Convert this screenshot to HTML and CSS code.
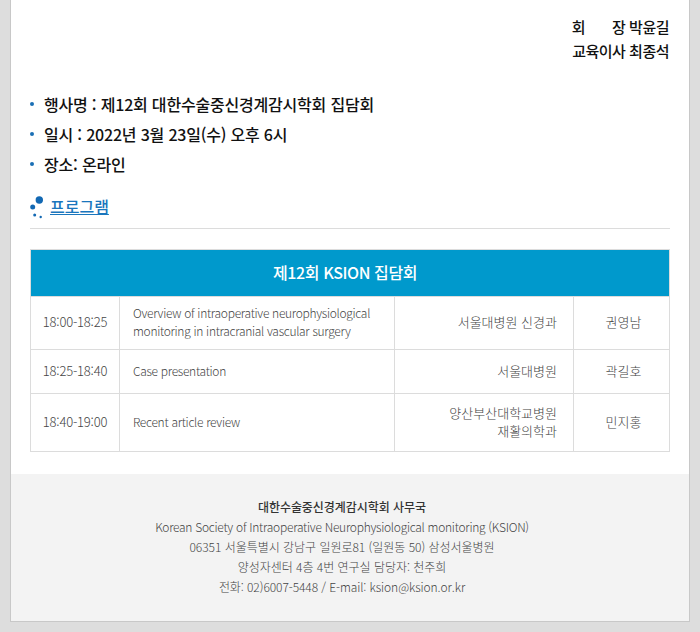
FILE: index.html
```html
<!DOCTYPE html>
<html lang="ko">
<head>
<meta charset="utf-8">
<title>제12회 KSION 집담회</title>
<link rel="stylesheet" href="styles.css">
</head>
<body>
<div class="card">
  <main class="content">
    <div class="sign">
      <p><span class="sign-role">회<i></i>장</span> 박윤길</p>
      <p>교육이사 최종석</p>
    </div>
    <ul class="info">
      <li>행사명 : 제12회 대한수술중신경계감시학회 집담회</li>
      <li>일시 : 2022년 3월 23일(수) 오후 6시</li>
      <li>장소: 온라인</li>
    </ul>
    <h2 class="section">
      <svg class="dots" width="16" height="24" viewBox="0 0 16 24"><circle cx="9.3" cy="5" r="3.7" fill="#1268b3"/><circle cx="2.7" cy="12" r="2.5" fill="#1268b3"/><circle cx="4.7" cy="20" r="1.5" fill="#1268b3"/><circle cx="10.7" cy="22" r="1.2" fill="#1268b3"/></svg>
      <a href="#">프로그램</a>
    </h2>
    <table class="program">
      <colgroup><col class="c1"><col class="c2"><col class="c3"><col class="c4"></colgroup>
      <thead><tr><th colspan="4">제12회 KSION 집담회</th></tr></thead>
      <tbody>
        <tr class="r1"><td class="time">18:00-18:25</td><td class="topic">Overview of intraoperative neurophysiological monitoring in intracranial vascular surgery</td><td class="org">서울대병원 신경과</td><td class="name">권영남</td></tr>
        <tr class="r2"><td class="time">18:25-18:40</td><td class="topic">Case presentation</td><td class="org">서울대병원</td><td class="name">곽길호</td></tr>
        <tr class="r3"><td class="time">18:40-19:00</td><td class="topic">Recent article review</td><td class="org">양산부산대학교병원<br>재활의학과</td><td class="name">민지홍</td></tr>
      </tbody>
    </table>
  </main>
  <footer class="foot">
    <p class="foot-title">대한수술중신경계감시학회 사무국</p>
    <p class="foot-en">Korean Society of Intraoperative Neurophysiological monitoring (KSION)</p>
    <p class="foot-ko">06351 서울특별시 강남구 일원로81 (일원동 50) 삼성서울병원</p>
    <p class="foot-ko">양성자센터 4층 4번 연구실 담당자: 천주희</p>
    <p class="foot-contact">전화: 02)6007-5448 / E-mail: ksion@ksion.or.kr</p>
  </footer>
</div>
</body>
</html>
```
FILE: styles.css
```css
html, body { margin: 0; padding: 0; }
body {
  background: #dddddd;
  font-family: "Noto Sans CJK KR", "Noto Sans", sans-serif;
  height: 632px;
  overflow: hidden;
  padding: 0 10px;
}
.card {
  background: #fff;
  border: 1px solid #c8c8c8;
  border-top: 0;
  height: 621px;
  display: flex;
  flex-direction: column;
  justify-content: space-between;
}
.content { padding: 15px 19px 0; }
.sign { text-align: right; padding-right: 1px; font-size: 15px; line-height: 24px; font-weight: 500; color: #111; letter-spacing: -.5px; }
.sign p { margin: 0; }
.sign-role i { display: inline-block; width: 27px; }
.info { list-style: none; margin: 26px 0 0; padding: 0; font-size: 16px; line-height: 30px; font-weight: 500; color: #111; letter-spacing: -.2px; }
.info li { position: relative; padding-left: 14px; }
.info li::before { content: ""; position: absolute; left: 0; top: 13px; width: 4px; height: 4px; border-radius: 50%; background: #1a6fb5; }
.section { display: flex; align-items: center; gap: 4px; margin: 7px 0 0; height: 42px; border-bottom: 1px solid #dcdcdc; font-size: 16px; font-weight: 500; }
.section a { color: #1a76bd; text-decoration: underline; letter-spacing: 0; margin-bottom: 2px; }
.dots { display: block; }
.program { width: 639px; margin-top: 20px; border-collapse: collapse; table-layout: fixed; font-size: 12px; font-weight: 300; color: #444; letter-spacing: -.3px; }
.c1 { width: 89px; } .c2 { width: 275px; } .c3 { width: 179px; } .c4 { width: 96px; }
.program th { height: 44px; padding: 0 10px 2px 0; background: #0099cc; color: #fff; font-size: 16px; font-weight: 500; border: 1px solid #dcdcdc; letter-spacing: -.4px; }
.program td { border: 1px solid #dcdcdc; padding: 0 13px; line-height: 18px; }
.r1 { height: 53px; } .r2 { height: 44px; } .r3 { height: 58px; }
.program .time { text-align: center; padding: 0 0 2px; font-size: 13px; letter-spacing: -.2px; }
.program .topic { padding-bottom: 2px; }
.program .org { text-align: right; padding: 0 16px 2px; font-size: 13px; letter-spacing: 0; }
.program .name { text-align: center; padding: 0 0 2px 4px; font-size: 13px; letter-spacing: 0; }
.foot { background: #f3f3f3; height: 147px; box-sizing: border-box; padding: 23px 16px 0 0; text-align: center; font-size: 12px; line-height: 20px; font-weight: 300; color: #444; }
.foot p { margin: 0; }
.foot .foot-title { font-weight: 500; color: #333; letter-spacing: -.05px; }
.foot .foot-en { letter-spacing: -.27px; }
.foot .foot-ko { letter-spacing: -.03px; }
.foot .foot-contact { letter-spacing: -.08px; }
```
